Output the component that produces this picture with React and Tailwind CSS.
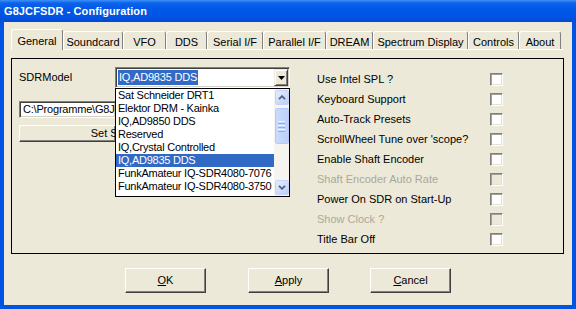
import React from "react";

const tabs = [
  { label: "General", cls: "w-[52px]", active: true },
  { label: "Soundcard", cls: "w-[60px]" },
  { label: "VFO", cls: "w-[43px]" },
  { label: "DDS", cls: "w-[41px]" },
  { label: "Serial I/F", cls: "w-[56px]" },
  { label: "Parallel I/F", cls: "w-[63px]" },
  { label: "DREAM", cls: "w-[47px]" },
  { label: "Spectrum Display", cls: "w-[95px]" },
  { label: "Controls", cls: "w-[51px]" },
  { label: "About", cls: "w-[42px]" },
];

const models = [
  "Sat Schneider DRT1",
  "Elektor DRM - Kainka",
  "IQ,AD9850 DDS",
  "Reserved",
  "IQ,Crystal Controlled",
  "IQ,AD9835 DDS",
  "FunkAmateur IQ-SDR4080-7076",
  "FunkAmateur IQ-SDR4080-3750",
];

const options = [
  { label: "Use Intel SPL ?" },
  { label: "Keyboard Support" },
  { label: "Auto-Track Presets" },
  { label: "ScrollWheel Tune over 'scope?" },
  { label: "Enable Shaft Encoder" },
  { label: "Shaft Encoder Auto Rate", disabled: true },
  { label: "Power On SDR on Start-Up" },
  { label: "Show Clock ?", disabled: true },
  { label: "Title Bar Off" },
];

function Chevron({ up }) {
  return (
    <svg width="8" height="5" viewBox="0 0 8 5">
      <path
        d={up ? "M1 4.2 L4 1.2 L7 4.2" : "M1 0.8 L4 3.8 L7 0.8"}
        fill="none"
        stroke="#4D6185"
        strokeWidth="1.8"
      />
    </svg>
  );
}

function ScrollButton({ up, extra }) {
  return (
    <div
      className={
        "w-[14px] h-[15px] rounded-[2px] border border-[#C3D3FD] bg-[linear-gradient(135deg,#E4ECFE,#BCCFFA)] flex items-center justify-center " +
        extra
      }
    >
      <Chevron up={up} />
    </div>
  );
}

function Checkbox({ disabled }) {
  return (
    <div
      className={
        "w-[13px] h-[13px] border border-t-[#808080] border-l-[#808080] border-b-white border-r-white shadow-[inset_1px_1px_0_#A0A0A0,inset_-1px_-1px_0_#E4E1D4] " +
        (disabled ? "bg-[#ECE9D8]" : "bg-white")
      }
    />
  );
}

function Button({ children, extra }) {
  return (
    <div
      className={
        "w-[81px] h-[25px] flex items-center justify-center text-[11px] text-black bg-[#ECE9D8] border border-t-white border-l-white border-r-[#404040] border-b-[#404040] shadow-[inset_-1px_-1px_0_#808080] " +
        extra
      }
    >
      {children}
    </div>
  );
}

export default function App() {
  return (
    <div className="w-[576px] h-[309px] bg-[#0054E3] flex flex-col overflow-hidden font-['Liberation_Sans',Arial,sans-serif] select-none">
      {/* Title bar */}
      <div className="h-[22px] shrink-0 flex items-center pl-[4px] bg-[linear-gradient(to_bottom,#3D91FA_0px,#0B63EB_3px,#0058E6_9px,#0054E3_17px,#0049D2_22px)]">
        <span className="text-white font-bold text-[11px] leading-none tracking-[0.1px]">
          G8JCFSDR - Configuration
        </span>
      </div>

      {/* Client */}
      <div className="flex-1 ml-[4px] mr-[4px] mb-[4px] bg-[#ECE9D8] flex flex-col pl-[7px] pr-[8px]">
        {/* Tabs */}
        <div className="h-[28px] shrink-0 flex items-end border-b border-white">
          {tabs.map((t) =>
            t.active ? (
              <div
                key={t.label}
                className={
                  t.cls +
                  " h-[21px] -mb-px relative z-10 bg-[#ECE9D8] rounded-t-[3px] border-t border-l border-r border-t-white border-l-white border-r-[#808080] flex items-start justify-center pt-[3px] text-[11px] text-black"
                }
              >
                {t.label}
              </div>
            ) : (
              <div
                key={t.label}
                className={
                  t.cls +
                  " h-[18px] bg-[#ECE9D8] rounded-t-[3px] border-t border-l border-r border-t-white border-l-white border-r-[#808080] flex items-start justify-center pt-[2px] text-[11px] text-black"
                }
              >
                {t.label}
              </div>
            )
          )}
        </div>

        {/* Page */}
        <div className="mt-[8px] h-[196px] shrink-0 border border-black flex">
          {/* Left area */}
          <div className="w-[304px] shrink-0 pl-[7px] pt-[8px] flex flex-col">
            <div className="flex items-center h-[21px]">
              <div className="w-[96px] text-[11px] text-black">SDRModel</div>
              <div className="relative w-[175px] h-[21px] flex bg-white border border-t-[#808080] border-l-[#808080] border-b-white border-r-white shadow-[inset_1px_1px_0_#404040,inset_-1px_-1px_0_#D4D0C8] p-[1px]">
                <div className="flex-1 flex items-center pl-[1px]">
                  <span className="bg-[#316AC5] text-white text-[11px] leading-[15px] h-[15px] px-[1px] tracking-[-0.2px]">
                    IQ,AD9835 DDS
                  </span>
                </div>
                <div className="w-[14px] h-[17px] bg-[#ECE9D8] border border-t-[#ECE9D8] border-l-[#ECE9D8] border-r-[#404040] border-b-[#404040] shadow-[inset_1px_1px_0_white,inset_-1px_-1px_0_#808080] flex items-center justify-center">
                  <svg width="7" height="4" viewBox="0 0 7 4">
                    <path d="M0 0 H7 L3.5 4 Z" fill="#000" />
                  </svg>
                </div>

                {/* Dropdown list */}
                <div className="absolute top-[20px] left-[-1px] w-[175px] h-[109px] z-20 bg-white border border-black flex">
                  <div className="flex-1 flex flex-col overflow-hidden">
                    {models.map((m) =>
                      m === "IQ,AD9835 DDS" ? (
                        <div
                          key={m}
                          className="h-[13px] leading-[13px] text-[11px] pl-[2px] tracking-[-0.25px] bg-[#316AC5] text-white whitespace-nowrap"
                        >
                          {m}
                        </div>
                      ) : (
                        <div
                          key={m}
                          className="h-[13px] leading-[13px] text-[11px] pl-[2px] tracking-[-0.25px] text-black whitespace-nowrap"
                        >
                          {m}
                        </div>
                      )
                    )}
                  </div>
                  <div className="w-[15px] h-full bg-[#F5F4EE] flex flex-col items-center">
                    <ScrollButton up extra="mt-[1px]" />
                    <div className="w-[14px] h-[36px] mt-[3px] rounded-[2px] border border-[#B6C9F7] bg-[linear-gradient(90deg,#CBDAFC,#BCD0FB)] flex flex-col items-center justify-center gap-[1px]">
                      <div className="w-[7px] h-[1px] bg-[#EEF4FE]" />
                      <div className="w-[7px] h-[1px] bg-[#8CB0F8]" />
                      <div className="w-[7px] h-[1px] bg-[#EEF4FE]" />
                      <div className="w-[7px] h-[1px] bg-[#8CB0F8]" />
                      <div className="w-[7px] h-[1px] bg-[#EEF4FE]" />
                      <div className="w-[7px] h-[1px] bg-[#8CB0F8]" />
                    </div>
                    <div className="flex-1" />
                    <ScrollButton extra="mb-[1px]" />
                  </div>
                </div>
              </div>
            </div>

            <div className="mt-[13px] w-[97px] h-[17px] bg-white border border-t-[#808080] border-l-[#808080] border-b-white border-r-white shadow-[inset_1px_1px_0_#404040,inset_-1px_-1px_0_#D4D0C8] flex items-center pl-[3px] text-[11px] text-black whitespace-nowrap overflow-hidden tracking-[-0.2px]">
              C:\Programme\G8JCFSDR\
            </div>

            <div className="mt-[7px] w-[97px] h-[17px] bg-[#ECE9D8] border border-t-white border-l-white border-r-[#404040] border-b-[#404040] shadow-[inset_-1px_-1px_0_#808080] overflow-hidden">
              <div className="w-[210px] h-full flex items-center justify-center text-[11px] text-black whitespace-nowrap">
                Set SDR Path
              </div>
            </div>
          </div>

          {/* Right area */}
          <div className="flex flex-col pt-[10px]">
            {options.map((o) => (
              <div key={o.label} className="h-[20px] flex items-center">
                <div
                  className={
                    "w-[174px] pl-[1px] text-[11px] whitespace-nowrap " +
                    (o.disabled ? "text-[#ACA899]" : "text-black")
                  }
                >
                  {o.label}
                </div>
                <Checkbox disabled={o.disabled} />
              </div>
            ))}
          </div>
        </div>

        {/* Buttons */}
        <div className="mt-[14px] flex pl-[114px]">
          <Button extra="">
            <span>
              <span className="underline">O</span>K
            </span>
          </Button>
          <Button extra="ml-[42px]">
            <span>
              <span className="underline">A</span>pply
            </span>
          </Button>
          <Button extra="ml-[41px]">
            <span>
              <span className="underline">C</span>ancel
            </span>
          </Button>
        </div>
      </div>
    </div>
  );
}
